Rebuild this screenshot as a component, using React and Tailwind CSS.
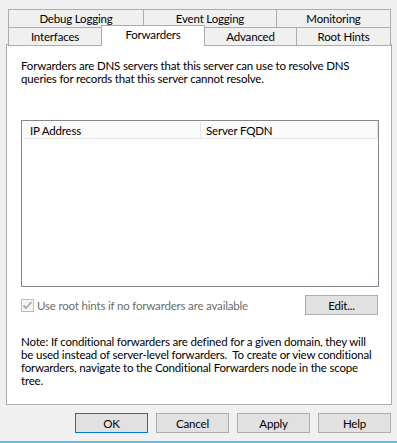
import React from 'react';

const FONT = "font-['Lato',sans-serif] text-[11.5px] tracking-[-0.18px] leading-[13px]";

function Tab({ label, w }) {
  return (
    <div
      className="h-[19px] -ml-px first:ml-0 border border-[#acacac] bg-[#f0f0f0] flex items-center justify-center text-black"
      style={{ width: w }}
    >
      {label}
    </div>
  );
}

function Button({ label, primary }) {
  return (
    <div
      className={`w-[73px] h-[20px] flex items-center justify-center bg-[#e1e1e1] border text-black ${primary ? 'border-[#0078d7]' : 'border-[#adadad]'}`}
    >
      {label}
    </div>
  );
}

export default function App() {
  return (
    <div className={`w-[397px] h-[443px] bg-[#f0f0f0] overflow-hidden ${FONT}`}>
      {/* tab rows */}
      <div className="pt-[9px] pl-[8px]">
        <div className="flex">
          <Tab label="Debug Logging" w="136px" />
          <Tab label="Event Logging" w="134px" />
          <Tab label="Monitoring" w="115px" />
        </div>
        <div className="flex items-start -mt-px h-[18px]">
          <Tab label="Interfaces" w="94px" />
          <div className="relative z-10 -ml-px -mt-[2px] w-[104px] h-[21px] border border-b-0 border-[#acacac] bg-white flex items-center justify-center text-black pb-[3px]">
            Forwarders
          </div>
          <Tab label="Advanced" w="93px" />
          <Tab label="Root Hints" w="95px" />
        </div>
      </div>

      {/* panel */}
      <div className="ml-[6px] -mt-px w-[386px] h-[361px] border border-[#acacac] bg-white text-black">
        <div className="pl-[14px] pt-[14px]">
          <p className="whitespace-nowrap">Forwarders are DNS servers that this server can use to resolve DNS</p>
          <p className="whitespace-nowrap">queries for records that this server cannot resolve.</p>
        </div>

        {/* list view */}
        <div className="ml-[14px] mt-[35px] w-[358px] h-[167px] border border-[#828790] bg-white pt-px pl-px">
          <div className="flex h-[17px] w-[355px] bg-[#fafafa] border-b border-[#e5e5e5]">
            <div className="w-[178px] border-r border-[#e5e5e5] pl-[7px] flex items-center">IP Address</div>
            <div className="flex-1 pl-[5px] flex items-center border-r border-[#e5e5e5]">Server FQDN</div>
          </div>
        </div>

        {/* checkbox + edit */}
        <div className="flex items-center ml-[14px] mt-[8px] w-[357px]">
          <svg width="13" height="13" viewBox="0 0 13 13" className="shrink-0">
            <rect x="0.5" y="0.5" width="12" height="12" fill="#f4f4f4" stroke="#bcbcbc" />
            <path d="M2.5 6.5 L5 9 L10.5 3" fill="none" stroke="#a8a8a8" strokeWidth="1.8" />
          </svg>
          <span className="ml-[3px] text-[#6d6d6d] whitespace-nowrap">Use root hints if no forwarders are available</span>
          <div className="ml-auto">
            <Button label="Edit..." />
          </div>
        </div>

        {/* note */}
        <div className="pl-[14px] pt-[20px]">
          <p className="whitespace-pre">Note: If conditional forwarders are defined for a given domain, they will</p>
          <p className="whitespace-pre">be used instead of server-level forwarders.  To create or view conditional</p>
          <p className="whitespace-pre">forwarders, navigate to the Conditional Forwarders node in the scope</p>
          <p className="whitespace-pre">tree.</p>
        </div>
      </div>

      {/* dialog buttons */}
      <div className="flex justify-end gap-[8px] pr-[6px] mt-[8px]">
        <Button label="OK" primary />
        <Button label="Cancel" />
        <Button label="Apply" />
        <Button label="Help" />
      </div>
      <div className="mt-[8px] h-[2px] bg-[#5dc2ea]" />
    </div>
  );
}
